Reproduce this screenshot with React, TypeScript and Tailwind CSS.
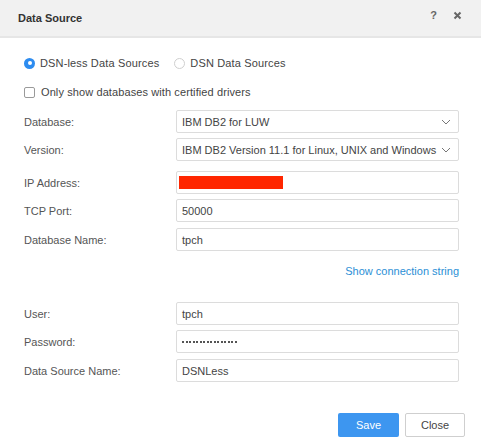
import React from "react";

const font = { fontFamily: '"Liberation Sans", Arial, sans-serif' };

function Row({ label, children, className = "" }: { label: string; children: React.ReactNode; className?: string }) {
  return (
    <div className={`flex items-center ${className}`}>
      <div className="w-[152px] shrink-0 text-[11px] leading-[14px] text-[#555]">{label}</div>
      <div className="flex-1">{children}</div>
    </div>
  );
}

function Box({ children, chevron = false }: { children?: React.ReactNode; chevron?: boolean }) {
  return (
    <div className="flex h-[23px] items-center justify-between rounded-[2px] border border-[#dcdcdc] bg-white pl-[5px] pr-[7px] text-[11px] leading-[14px] text-[#444]">
      <div className="flex items-center whitespace-nowrap">{children}</div>
      {chevron && (
        <svg width="10" height="6" viewBox="0 0 10 6" className="shrink-0">
          <path d="M1 1 L5 5 L9 1" fill="none" stroke="#777" strokeWidth="1" />
        </svg>
      )}
    </div>
  );
}

export default function App() {
  const dots = Array.from({ length: 16 });
  return (
    <div className="h-[443px] w-[481px] bg-white" style={font}>
      <div className="flex h-[38px] items-center justify-between border-b-[2px] border-[#e6e6e6] bg-[#f1f1f1] pl-[18px] pr-[19px]">
        <div className="text-[11px] font-bold text-[#333]">Data Source</div>
        <div className="flex items-center gap-[16px] pb-[6px]">
          <span className="text-[11px] font-bold text-[#666]">?</span>
          <svg width="9" height="9" viewBox="0 0 9 9">
            <path d="M1.5 1.5 L7.5 7.5 M7.5 1.5 L1.5 7.5" stroke="#666" strokeWidth="2" />
          </svg>
        </div>
      </div>

      <div className="px-[24px] pt-[18px]">
        <div className="flex h-[14px] items-center text-[11px] leading-[14px] text-[#444]">
          <div className="flex items-center tracking-[0.15px]">
            <span className="mr-[5px] flex h-[11px] w-[11px] items-center justify-center rounded-full bg-[#2d8cf0]">
              <span className="h-[4px] w-[4px] rounded-full bg-white" />
            </span>
            DSN-less Data Sources
          </div>
          <div className="ml-[15px] flex items-center tracking-[0.15px]">
            <span className="mr-[5px] h-[11px] w-[11px] rounded-full border border-[#cfcfcf] bg-white" />
            DSN Data Sources
          </div>
        </div>

        <div className="mt-[15px] flex h-[14px] items-center text-[11px] leading-[14px] tracking-[0.1px] text-[#444]">
          <span className="mr-[6px] h-[11px] w-[11px] rounded-[2px] border border-[#9a9a9a] bg-white" />
          Only show databases with certified drivers
        </div>

        <div className="mt-[11px] w-[435px]">
          <Row label="Database:">
            <Box chevron>IBM DB2 for LUW</Box>
          </Row>
          <Row label="Version:" className="mt-[5px]">
            <Box chevron>IBM DB2 Version 11.1 for Linux, UNIX and Windows</Box>
          </Row>
          <Row label="IP Address:" className="mt-[10px]">
            <Box>
              <span className="ml-[-3px] h-[13px] w-[104px] bg-[#ff2600]" />
            </Box>
          </Row>
          <Row label="TCP Port:" className="mt-[5px]">
            <Box>50000</Box>
          </Row>
          <Row label="Database Name:" className="mt-[6px]">
            <Box>tpch</Box>
          </Row>
          <div className="mt-[13px] flex h-[14px] justify-end text-[11px] leading-[14px] text-[#2b8fd6]">Show connection string</div>
          <Row label="User:" className="mt-[24px]">
            <Box>tpch</Box>
          </Row>
          <Row label="Password:" className="mt-[5px]">
            <Box>
              <div className="flex items-center gap-[1.5px]">
                {dots.map((_, i) => (
                  <span key={i} className="h-[2px] w-[2px] bg-[#555]" />
                ))}
              </div>
            </Box>
          </Row>
          <Row label="Data Source Name:" className="mt-[6px]">
            <Box>DSNLess</Box>
          </Row>
        </div>

        <div className="mr-[-8px] mt-[31px] flex justify-end gap-[6px]">
          <button className="h-[24px] w-[61px] rounded-[2px] bg-[#3d96f0] text-[11px] text-white">Save</button>
          <button className="h-[24px] w-[60px] rounded-[2px] border border-[#cfcfcf] bg-white text-[11px] text-[#444]">Close</button>
        </div>
      </div>
    </div>
  );
}
